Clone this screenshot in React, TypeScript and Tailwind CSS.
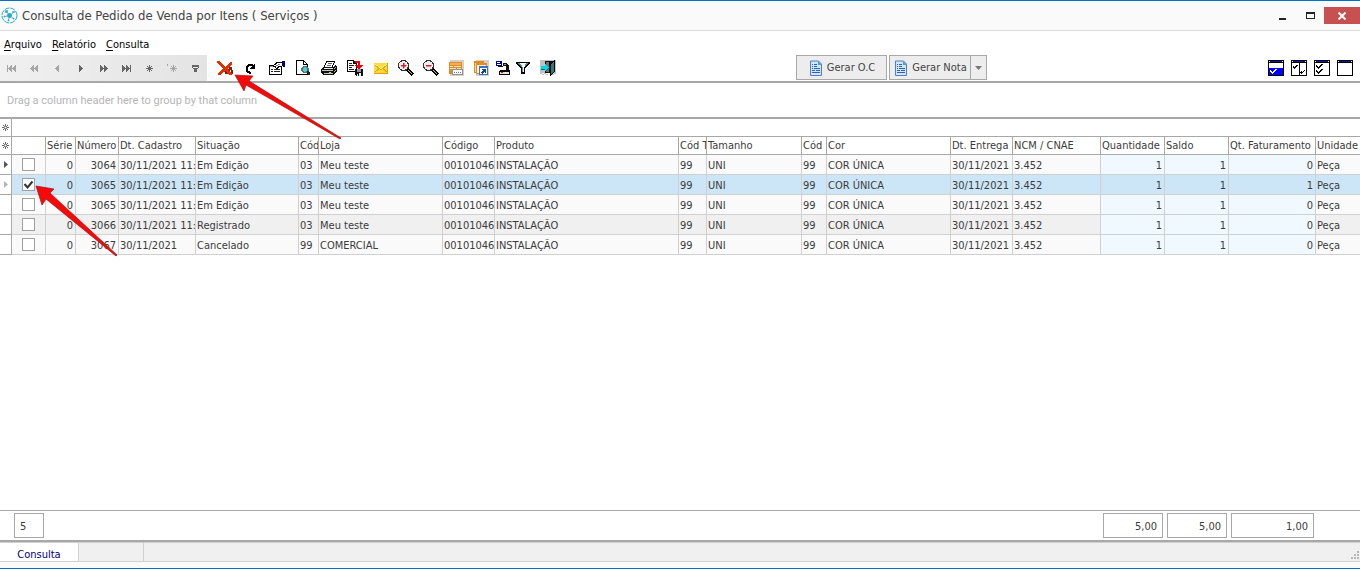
import { useState } from "react";
import type { ReactNode } from "react";

interface Column {
  title: string;
  width: string;
  right?: boolean;
  tinted?: boolean;
}

interface Row {
  id: number;
  values: string[];
}

interface Tool {
  label: string;
  width: string;
  icon: ReactNode;
}

const columns: Column[] = [
  { title: "Série", width: "w-[30px]", right: true },
  { title: "Número", width: "w-[43px]", right: true },
  { title: "Dt. Cadastro", width: "w-[77px]" },
  { title: "Situação", width: "w-[103px]" },
  { title: "Cód", width: "w-[20px]" },
  { title: "Loja", width: "w-[124px]" },
  { title: "Código", width: "w-[52px]" },
  { title: "Produto", width: "w-[184px]" },
  { title: "Cód T", width: "w-[28px]" },
  { title: "Tamanho", width: "w-[95px]" },
  { title: "Cód", width: "w-[25px]" },
  { title: "Cor", width: "w-[124px]" },
  { title: "Dt. Entrega", width: "w-[62px]" },
  { title: "NCM / CNAE", width: "w-[88px]" },
  { title: "Quantidade", width: "w-[64px]", right: true, tinted: true },
  { title: "Saldo", width: "w-[64px]", right: true, tinted: true },
  { title: "Qt. Faturamento", width: "w-[87px]", right: true, tinted: true },
  { title: "Unidade", width: "w-auto" },
];

const rows: Row[] = [
  { id: 1, values: ["0", "3064", "30/11/2021 11:", "Em Edição", "03", "Meu teste", "00101046", "INSTALAÇÃO", "99", "UNI", "99", "COR ÚNICA", "30/11/2021", "3.452", "1", "1", "0", "Peça"] },
  { id: 2, values: ["0", "3065", "30/11/2021 11:", "Em Edição", "03", "Meu teste", "00101046", "INSTALAÇÃO", "99", "UNI", "99", "COR ÚNICA", "30/11/2021", "3.452", "1", "1", "1", "Peça"] },
  { id: 3, values: ["0", "3065", "30/11/2021 11:", "Em Edição", "03", "Meu teste", "00101046", "INSTALAÇÃO", "99", "UNI", "99", "COR ÚNICA", "30/11/2021", "3.452", "1", "1", "0", "Peça"] },
  { id: 4, values: ["0", "3066", "30/11/2021 11:", "Registrado", "03", "Meu teste", "00101046", "INSTALAÇÃO", "99", "UNI", "99", "COR ÚNICA", "30/11/2021", "3.452", "1", "1", "0", "Peça"] },
  { id: 5, values: ["0", "3067", "30/11/2021", "Cancelado", "99", "COMERCIAL", "00101046", "INSTALAÇÃO", "99", "UNI", "99", "COR ÚNICA", "30/11/2021", "3.452", "1", "1", "0", "Peça"] },
];

const Icon: React.FC<{ children: ReactNode }> = ({ children }) => (
  <svg className="size-4 shrink-0" viewBox="0 0 16 16" fill="none" shapeRendering="crispEdges" aria-hidden="true">
    {children}
  </svg>
);

const navigation = [
  { label: "Primeiro", dim: true, path: "M3 5h1v7h-1zM8 5v7l-4-3.5zM12 5v7l-4-3.5z" },
  { label: "Página anterior", dim: true, path: "M7 5v7l-4-3.5zM11 5v7l-4-3.5z" },
  { label: "Anterior", dim: true, path: "M9 5v7l-4-3.5z" },
  { label: "Próximo", dim: false, path: "M6 5v7l4-3.5z" },
  { label: "Próxima página", dim: false, path: "M4 5v7l4-3.5zM8 5v7l4-3.5z" },
  { label: "Último", dim: false, path: "M3 5v7l4-3.5zM7 5v7l4-3.5zM11 5h1v7h-1z" },
  { label: "Marcar", dim: false, path: "M7 5h1v7h-1zM4 8h7v1h-7zM5 6h1v1h-1zM9 6h1v1h-1zM5 10h1v1h-1zM9 10h1v1h-1zM6 7h3v3h-3z" },
  { label: "Ir para marca", dim: true, path: "M2 4h1v2h-1zM8 5h1v7h-1zM5 8h7v1h-7zM6 6h1v1h-1zM10 6h1v1h-1zM6 10h1v1h-1zM10 10h1v1h-1zM7 7h3v3h-3z" },
  { label: "Filtro", dim: false, path: "M4 5h7v2h-7zM4 7h1v1h-1zM10 7h1v1h-1zM5 8h5v1h-5zM6 9h3v3h-3z" },
];

const lens = (
  <>
    <path d="M9 9l6 6" stroke="#000" strokeWidth="3" />
    <path d="M10 10l4 4" stroke="#d5d500" strokeWidth="1" />
    <circle cx="5.500" cy="5.500" r="5" fill="#ededed" stroke="#333" strokeWidth="1" />
  </>
);

const tools: Tool[] = [
  {
    label: "Cancelar",
    width: "w-[26px]",
    icon: (
      <svg className="h-4 w-[18px] shrink-0" viewBox="0 0 18 16" fill="none" shapeRendering="crispEdges" aria-hidden="true">
        <path d="M13 7h3v3h-3zM9 11h3v3h-3zM13 12h4v2h-4zM15 10h2v2h-2zM11 9h3v3h-3z" fill="#8b1a0c" />
        <path d="M1 1h2l13 12v2h-2l-13-12z" fill="#e03000" />
        <path d="M14 2h2v2l-8 8-4 3h-2v-2l5-4z" fill="#e03000" />
      </svg>
    ),
  },
  {
    label: "Atualizar",
    width: "w-[26px]",
    icon: (
      <Icon>
        <path d="M8 13h-1l-3-2v-4l2-2h3l2 2" stroke="#000" strokeWidth="2" />
        <path d="M12 3v6h-5z" fill="#000" />
      </Icon>
    ),
  },
  {
    label: "Propriedades",
    width: "w-[26px]",
    icon: (
      <Icon>
        <path d="M0 5h13v10h-13z" fill="#000" />
        <path d="M1 7h11v7h-11z" fill="#fff" />
        <path d="M1 6h6v1h-6z" fill="#999" />
        <path d="M2 9h2v1h-2zM5 9h6v1h-6zM2 11h2v1h-2zM5 11h6v1h-6z" fill="#222" />
        <path d="M4 5h1v-1h1v-1h1v-1h6v5h-3v1h-1v1h-2v-1h-1v-1h-2z" fill="#000" />
        <path d="M5 5h2v-1h1v-1h5v3h-4v1h-1v1h-1v-2h-2z" fill="#fff" />
        <path d="M9 4h2v1h-2zM7 5h2v1h-2z" fill="#888" />
        <path d="M13 1h3v6h-2v-1h-1z" fill="#000080" />
      </Icon>
    ),
  },
  {
    label: "Visualizar impressão",
    width: "w-[26px]",
    icon: (
      <Icon>
        <path d="M1 0h8v1h1v1h1v1h1v1h1v11h-12z" fill="#000" />
        <path d="M2 1h6v4h4v9h-10z" fill="#fff" />
        <path d="M9 2h1v1h1v1h-2z" fill="#fff" />
        <path d="M8 6h4v1h1v1h1v3h-1v1h-1v1h-4v-1h-1v-1h-1v-3h1v-1h1z" fill="#55727a" />
        <path d="M9 7h2v1h1v3h-1v1h-2v-1h-1v-3h1z" fill="#48d0d0" />
        <path d="M12 11h2v1h1v3h-2v-2h-1z" fill="#222" />
      </Icon>
    ),
  },
  {
    label: "Imprimir",
    width: "w-[26px]",
    icon: (
      <Icon>
        <path d="M5 1h9v2h-1v2h-1v2h-9v-2h1v-2h1z" fill="#000" />
        <path d="M6 2h7v1h-1v2h-1v2h-7v-2h1v-2h1z" fill="#fff" />
        <path d="M7 3h4v1h-4zM6 5h4v1h-4z" fill="#666" />
        <path d="M2 7h11v-1h1v-1h1v1h1v6h-1v1h-1v1h-1v1h-11v-1h-1v-1h-1v-4h1v-1h1z" fill="#111" />
        <path d="M3 8h9v1h-9z" fill="#eee" />
        <path d="M1 10h11v1h-11zM3 13h9v1h-9z" fill="#c4c4c4" />
        <path d="M8 12h2v1h-2z" fill="#e8e000" />
        <path d="M13 8h1v1h-1zM14 7h1v1h-1zM13 11h1v1h-1zM14 10h1v1h-1z" fill="#b0b0b0" />
      </Icon>
    ),
  },
  {
    label: "Salvar relatório",
    width: "w-[26px]",
    icon: (
      <Icon>
        <path d="M0 0h7v1h1v1h1v1h1v9h-10z" fill="#000" />
        <path d="M1 1h5v3h3v7h-8z" fill="#fff" />
        <path d="M2 3h3v1h-3zM2 5h5v1h-5zM2 7h3v1h-3zM2 9h5v1h-5z" fill="#222" />
        <path d="M8 1h5v4h3v1h-1v1h-1v1h-1v1h-2v-1h-1v-1h-1v-1h-1v-1h3v-2h-3z" fill="#f00000" />
        <path d="M8 9h8v7h-7v-1h-1z" fill="#111" />
        <path d="M10 9h4v3h-4z" fill="#9292b8" />
        <path d="M10 14h1v2h-1zM12 13h2v3h-2z" fill="#eee" />
      </Icon>
    ),
  },
  {
    label: "Enviar e-mail",
    width: "w-[25px]",
    icon: (
      <Icon>
        <path d="M1 3h14v11h-14z" fill="#ffd83a" />
        <path d="M1 13h14v1h-14zM14 3h1v11h-1z" fill="#e0a000" />
        <path d="M2 4l6 5 6-5" stroke="#fff6b0" />
        <path d="M2 5l6 5 6-5M2 12l4-3M14 12l-4-3" stroke="#e5a812" />
      </Icon>
    ),
  },
  {
    label: "Ampliar",
    width: "w-[25px]",
    icon: (
      <Icon>
        {lens}
        <path d="M3 5h5v1h-5zM5 3h1v5h-1z" fill="#d8202c" stroke="#d8202c" strokeWidth="0.5" />
      </Icon>
    ),
  },
  {
    label: "Reduzir",
    width: "w-[25px]",
    icon: (
      <Icon>
        {lens}
        <path d="M3 5h5v1h-5z" fill="#d8202c" stroke="#d8202c" strokeWidth="0.5" />
      </Icon>
    ),
  },
  {
    label: "Layout da grade",
    width: "w-[25px]",
    icon: (
      <Icon>
        <path d="M2 0h14v16h-14z" fill="#d4d0c8" />
        <path d="M1 2h13v12h-13z" fill="#e08a28" />
        <path d="M2 3h11v2h-11z" fill="#f3ae58" />
        <path d="M2 6h3v1h-3zM6 6h7v1h-7zM2 8h6v1h-6zM9 8h4v1h-4z" fill="#ffe3b8" />
        <path d="M4 9h11v6h-11z" fill="#909090" />
        <path d="M5 10h9v4h-9z" fill="#fff" />
        <path d="M6 12h1v1h-1zM8 12h1v1h-1zM10 12h1v1h-1zM12 12h1v1h-1z" fill="#777" />
      </Icon>
    ),
  },
  {
    label: "Copiar grade",
    width: "w-[25px]",
    icon: (
      <Icon>
        <path d="M3 0h13v16h-13z" fill="#d4d0c8" />
        <path d="M1 1h10v12h-10z" fill="#e08a28" />
        <path d="M2 3h8v9h-8z" fill="#ffd79c" />
        <path d="M3 3h11v11h-11z" fill="#e08a28" />
        <path d="M4 5h9v8h-9z" fill="#fff1d8" />
        <path d="M6 6h9v9h-9z" fill="#3c72c0" />
        <path d="M7 8h7v6h-7z" fill="#fff" />
        <path d="M9 9h4v4h-1v-1h-1v1h-1v1h-1v-1h-1v-1h1v-1h1v-1h-1z" fill="#0a3faa" />
      </Icon>
    ),
  },
  {
    label: "Examinar",
    width: "w-[20px]",
    icon: (
      <Icon>
        <path d="M1 1h6v5h-6z" fill="#000080" />
        <path d="M2 2h3v1h-3zM2 4h4v1h-4z" fill="#fff" />
        <path d="M3 6h5v1h-5zM8 3h4v1h1v1h1v5h-3v-4h-3z" fill="#111" />
        <path d="M9 4h2v1h-2z" fill="#999" />
        <path d="M5 10h10v5h-10zM4 11h1v4h-1z" fill="#000" />
        <path d="M5 12h9v2h-9z" fill="#e4e4e4" />
        <path d="M6 12h2v1h-2z" fill="#f00" />
      </Icon>
    ),
  },
  {
    label: "Filtrar",
    width: "w-[20px]",
    icon: (
      <Icon>
        <path d="M1 2h14v2h-1v1h-1v1h-1v1h-1v1h-1v6h-4v-6h-1v-1h-1v-1h-1v-1h-1v-1h-1z" fill="#000" />
        <path d="M3 3h10v1h-1v1h-1v1h-1v1h-1v5h-2v-5h-1v-1h-1v-1h-1v-1h-1z" fill="#fff" />
        <path d="M3 3h2v1h1v1h1v2h1v5h-1v-5h-1v-1h-1v-1h-1v-1h-1zM11 3h2v1h-1v1h-1v1h-1v-2h1z" fill="#3e9c9c" />
      </Icon>
    ),
  },
  {
    label: "Sair",
    width: "w-[30px]",
    icon: (
      <Icon>
        <path d="M0 0h16v13h-16z" fill="#c0c0c0" />
        <path d="M0 13h2v1h-2zM4 13h2v1h-2zM2 14h2v1h-2zM6 14h2v1h-2zM12 14h2v1h-2zM14 13h2v1h-2z" fill="#c0c0c0" />
        <path d="M5 1h9v12h-9z" fill="#101010" />
        <path d="M6 2h3v10h-3z" fill="#707070" />
        <path d="M14 1v11l-4 4v-11z" fill="#1f8080" stroke="#000" />
        <path d="M1 6h4v-2h1v1h1v1h1v1h1v1h-1v1h-1v1h-1v1h-1v-2h-4z" fill="#00d8e8" />
        <path d="M1 9h4v1h-4zM6 10h1v1h-1zM7 9h1v1h-1zM8 8h1v1h-1z" fill="#086868" />
      </Icon>
    ),
  },
];

const windowFrame = (
  <>
    <path d="M0 0h16v16h-16z" fill="#000" />
    <path d="M1 3h14v12h-14z" fill="#fff" />
    <path d="M2 1h12v1h-12z" fill="#1010a0" />
    <path d="M1 1h1v1h-1zM14 1h1v1h-1z" fill="#fff" />
  </>
);

const viewModes = [
  {
    label: "Marcar linha",
    icon: (
      <Icon>
        {windowFrame}
        <path d="M1 8h14v7h-14z" fill="#0000ff" />
        <path d="M2 10h1v1h1v1h1v-1h1v-1h1v-1h2v1h-1v1h-1v1h-1v1h-1v1h-1v-1h-1v-1h-1z" fill="#fff" />
      </Icon>
    ),
  },
  {
    label: "Marcar colunas",
    icon: (
      <Icon>
        {windowFrame}
        <path d="M8 3h1v12h-1z" fill="#000" />
        <path d="M2 6h1v1h1v-1h1v-1h2v1h-1v1h-1v1h-1v1h-1v-1h-1zM10 11h1v1h1v-1h1v-1h1v1h-1v1h-1v1h-1v1h-1v-1h-1z" fill="#000" />
      </Icon>
    ),
  },
  {
    label: "Marcar todos",
    icon: (
      <Icon>
        {windowFrame}
        <path d="M2 5h1v1h1v1h1v-1h1v-1h1v-1h2v1h-1v1h-1v1h-1v1h-1v1h-1v-1h-1v-1h-1zM2 10h1v1h1v1h1v-1h1v-1h1v-1h2v1h-1v1h-1v1h-1v1h-1v1h-1v-1h-1v-1h-1z" fill="#000" />
      </Icon>
    ),
  },
  { label: "Desmarcar todos", icon: <Icon>{windowFrame}</Icon> },
];

const documentIcon = (
  <svg className="size-4 shrink-0" viewBox="0 0 16 16" fill="none" aria-hidden="true">
    <path d="M2.500 1h8l3 3v11.500h-11z" fill="#cfe6fb" stroke="#4f7fc0" />
    <path d="M10 1v4h4z" fill="#4f9fe0" />
    <path d="M4 4.500h1M6 4.500h3M4 6.500h1M6 6.500h3M4 8.500h1M6 8.500h6M4 10.500h3M8 10.500h4M4 12.500h8" stroke="#2f5fb5" />
  </svg>
);

const asterisk = (
  <svg className="mx-auto block" width="7" height="7" viewBox="0 0 7 7" stroke="#666" aria-hidden="true">
    <path d="M3.500 0v7M0 3.500h7M1 1l5 5M6 1l-5 5" />
    <circle cx="3.500" cy="3.500" r="1" fill="#fff" stroke="none" />
  </svg>
);

const Header: React.FC = () => (
  <header className="flex h-[31px] items-center border-t border-b border-t-[#0072c6] border-b-[#d9d9d9] bg-[#fafafa]">
    <svg className="ml-px" width="17" height="17" viewBox="0 0 17 17" fill="none" stroke="#27a9c9" aria-hidden="true">
      <circle cx="8.500" cy="8.500" r="7.500" strokeDasharray="5 1" />
      <circle cx="8.500" cy="8.500" r="2" fill="#27a9c9" />
      <path d="M8.500 8.500l-3-4M8.500 8.500l4-3M8.500 8.500l4 3M8.500 8.500l-1 5M8.500 8.500l-5 1" strokeWidth="0.8" />
      <path d="M4.500 3.500h2v2h-2zM11.500 4.500h2v1h-2zM12 11h1v1h-1zM7 13h1v1h-1zM3 9h1v1h-1z" fill="#27a9c9" strokeWidth="0.6" />
    </svg>
    <h1 className="ml-1 text-[13px] leading-4 whitespace-nowrap text-[#444]">
      Consulta de Pedido de Venda por Itens ( Serviços )
    </h1>
    <div className="ml-auto flex items-center">
      <button type="button" aria-label="Minimizar" className="flex h-4 w-[28px] items-end justify-center pb-1">
        <span className="h-0.5 w-[7px] bg-[#222]" />
      </button>
      <button type="button" aria-label="Maximizar" className="flex h-4 w-[28px] items-center justify-center">
        <span className="h-[7px] w-[9px] border border-t-2 border-[#222]" />
      </button>
      <button type="button" aria-label="Fechar" className="flex h-[17px] w-9 items-center justify-center bg-[#c75050]">
        <svg width="8" height="8" viewBox="0 0 8 8" stroke="#fff" strokeWidth="2" aria-hidden="true">
          <path d="M0.500 0.500l7 7M7.500 0.500l-7 7" />
        </svg>
      </button>
    </div>
  </header>
);

const Menu: React.FC = () => (
  <nav className="flex h-6 items-end gap-[10px] px-1 pb-0.5 leading-4 text-black">
    {["Arquivo", "Relatório", "Consulta"].map((item) => (
      <button type="button" key={item}>
        <span className="underline underline-offset-2">{item[0]}</span>
        {item.slice(1)}
      </button>
    ))}
  </nav>
);

const Toolbar: React.FC = () => (
  <div className="flex h-7 border-b-2 border-[#a8a8a8]">
    <div className="flex bg-linear-to-r from-[#f0f0f0] to-[#e4e4e4]">
      {navigation.map((item) => (
        <button
          type="button"
          key={item.label}
          aria-label={item.label}
          className={item.dim ? "flex w-[23px] items-center justify-center text-[#a6a6a6]" : "flex w-[23px] items-center justify-center text-[#666]"}
        >
          <Icon>
            <path d={item.path} fill="currentColor" />
          </Icon>
        </button>
      ))}
    </div>
    <div className="flex pl-[5px]">
      {tools.map((tool) => (
        <button type="button" key={tool.label} aria-label={tool.label} className={`flex items-center justify-center ${tool.width}`}>
          {tool.icon}
        </button>
      ))}
    </div>
    <div className="ml-[233px] flex gap-0.5 pb-px leading-4 whitespace-nowrap text-[#444]">
      <button type="button" className="flex w-[91px] items-center justify-center gap-[3px] border border-[#a8a8a8] bg-[#ededed]">
        {documentIcon}
        <span className="pt-px">Gerar O.C</span>
      </button>
      <div className="flex border border-[#a8a8a8] bg-[#ededed]">
        <button type="button" className="flex w-[80px] items-center justify-center gap-[3px]">
          {documentIcon}
          <span className="pt-px">Gerar Nota</span>
        </button>
        <button type="button" aria-label="Mais opções" className="flex w-4 items-center justify-center border-l border-[#a8a8a8]">
          <svg width="7" height="4" viewBox="0 0 7 4" aria-hidden="true">
            <path d="M0 0h7l-3.500 4z" fill="#777" />
          </svg>
        </button>
      </div>
    </div>
    <div className="ml-auto flex items-center gap-[7px] pr-[7px]">
      {viewModes.map((mode) => (
        <button type="button" key={mode.label} aria-label={mode.label}>
          {mode.icon}
        </button>
      ))}
    </div>
  </div>
);

const Grid: React.FC = () => {
  const [checked, setChecked] = useState<number[]>([2]);

  const toggle = (id: number) => {
    setChecked(checked.includes(id) ? checked.filter((item) => item !== id) : [...checked, id]);
  };

  const rowColor = (row: Row, index: number) => {
    if (row.id === 2) return "bg-[#cde6f7]";
    return index % 2 ? "bg-[#f0f0f0]" : "bg-[#fafafa]";
  };

  return (
    <table className="w-full table-fixed border-separate border-spacing-0 whitespace-nowrap text-[#3b3b3b]">
      <colgroup>
        <col className="w-[12px]" />
        <col className="w-[34px]" />
        {columns.map((column, i) => (
          <col key={i} className={column.width} />
        ))}
      </colgroup>
      <thead>
        <tr className="h-[18px]">
          <td className="border-r border-b border-[#a8a8a8]">{asterisk}</td>
          <td className="border-b border-[#a8a8a8]" colSpan={19} />
        </tr>
        <tr className="h-[18px]">
          <td className="border-r border-b border-[#a8a8a8]">{asterisk}</td>
          <td className="border-r border-b border-[#a8a8a8]" />
          {columns.map((column, i) => (
            <th key={i} scope="col" className="overflow-hidden border-r border-b border-[#a8a8a8] pt-px pl-px text-left leading-4 font-normal last:border-r-0">
              {column.title}
            </th>
          ))}
        </tr>
      </thead>
      <tbody>
        {rows.map((row, index) => (
          <tr key={row.id} className={`h-5 ${rowColor(row, index)}`}>
            <td className="border-r border-b border-[#a8a8a8] bg-white">
              {index < 2 && (
                <svg className="mx-auto block" width="4" height="7" viewBox="0 0 4 7" aria-hidden="true">
                  <path d="M0 0l4 3.500-4 3.500z" fill={index === 0 ? "#555" : "#b5b5b5"} />
                </svg>
              )}
            </td>
            <td className="border-r border-b border-[#d0d0d0]">
              <label className="relative mx-auto block size-[13px]">
                <input
                  type="checkbox"
                  aria-label={`Selecionar pedido ${row.values[1]}`}
                  checked={checked.includes(row.id)}
                  onChange={() => toggle(row.id)}
                  className="peer block size-[13px] appearance-none border border-[#a0a0a0] bg-white"
                />
                <svg className="pointer-events-none absolute inset-0 hidden peer-checked:block" viewBox="0 0 13 13" fill="none" aria-hidden="true">
                  <path d="M2.500 6l3 3.500 5-6" stroke="#333" strokeWidth="2" />
                </svg>
              </label>
            </td>
            {row.values.map((value, i) => (
              <td
                key={i}
                className={`overflow-hidden border-r border-b border-[#d0d0d0] pt-0.5 leading-4 last:border-r-0 ${columns[i].right ? "pr-0.5 text-right" : "pl-px"} ${columns[i].tinted && row.id !== 2 ? "bg-[#f0f9ff]" : ""}`}
              >
                {value}
              </td>
            ))}
          </tr>
        ))}
      </tbody>
    </table>
  );
};

const Summary: React.FC = () => (
  <div className="flex h-8 items-start border-t border-b-2 border-[#a8a8a8] pt-0.5 pr-[46px] pl-[14px] leading-4 text-[#3b3b3b]">
    <output className="flex h-[25px] w-[30px] items-center border border-[#a8a8a8] pt-0.5 pl-[5px]">5</output>
    <div className="ml-auto flex gap-1">
      <output className="flex h-[25px] w-[60px] items-center justify-end border border-[#a8a8a8] pt-0.5 pr-[5px]">5,00</output>
      <output className="flex h-[25px] w-[60px] items-center justify-end border border-[#a8a8a8] pt-0.5 pr-[5px]">5,00</output>
      <output className="flex h-[25px] w-[83px] items-center justify-end border border-[#a8a8a8] pt-0.5 pr-[5px]">1,00</output>
    </div>
  </div>
);

const StatusBar: React.FC = () => (
  <footer className="border-b border-[#0072c6] bg-[#fafafa] pb-[6px]">
    <div className="flex h-5 border-t border-b border-[#d0d0d0] bg-[#f0f0f0]">
      <button type="button" className="w-[79px] border-r border-[#d0d0d0] bg-white pt-1 leading-4 text-[#000080]">
        Consulta
      </button>
      <span className="w-[65px] border-r border-[#d0d0d0]" />
      <svg className="mt-auto mr-px mb-0.5 ml-auto" width="8" height="8" viewBox="0 0 8 8" fill="#b8b8b8" aria-hidden="true">
        <path d="M6 0h2v2h-2zM3 3h2v2h-2zM6 3h2v2h-2zM0 6h2v2h-2zM3 6h2v2h-2zM6 6h2v2h-2z" />
      </svg>
    </div>
  </footer>
);

// Callout arrows drawn over the toolbar and the checked row
const Arrows: React.FC = () => (
  <svg className="pointer-events-none absolute top-0 left-0" width="350" height="265" viewBox="0 0 350 265" fill="#f40a0a" stroke="#a81010" strokeWidth="0.7" aria-hidden="true">
    <path d="M235 75l18 1-4 5 92 57-1 1-94-54-2 6z" />
    <path d="M36 186l18 3-4 4 67 62-1 1-70-57-4 6z" />
  </svg>
);

const App: React.FC = () => {
  return (
    <div className="relative flex min-h-screen flex-col overflow-x-hidden bg-white font-['DejaVu_Sans_Condensed','DejaVu_Sans',sans-serif] text-[11px]">
      <Header />
      <Menu />
      <Toolbar />
      <div className="flex h-9 items-center border-b-2 border-[#a8a8a8] px-[7px] pt-0.5 font-[Roboto,sans-serif] leading-4 text-[#b5b5b5]">
        Drag a column header here to group by that column
      </div>
      <main className="flex-1">
        <Grid />
      </main>
      <Summary />
      <StatusBar />
      <Arrows />
    </div>
  );
};

export default App;
